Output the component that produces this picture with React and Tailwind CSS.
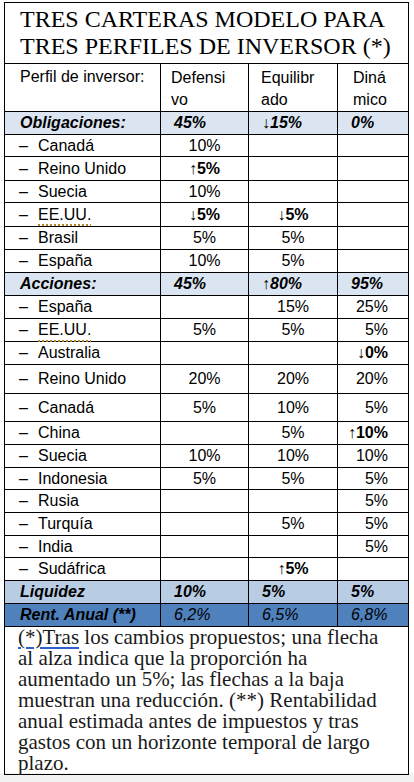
import React from 'react';

const obligaciones = [
  { name: 'Canadá', v: ['10%', '', ''], h: 'h-[22px]' },
  { name: 'Reino Unido', v: ['↑5%', '', ''], b: [0], h: 'h-[24px]' },
  { name: 'Suecia', v: ['10%', '', ''], h: 'h-[22px]' },
  { name: 'EE.UU.', v: ['↓5%', '↓5%', ''], b: [0, 1], h: 'h-[24px]', spell: true },
  { name: 'Brasil', v: ['5%', '5%', ''], h: 'h-[23px]' },
  { name: 'España', v: ['10%', '5%', ''], h: 'h-[23px]' },
];

const acciones = [
  { name: 'España', v: ['', '15%', '25%'], h: 'h-[23px]' },
  { name: 'EE.UU.', v: ['5%', '5%', '5%'], h: 'h-[23px]', spell: true },
  { name: 'Australia', v: ['', '', '↓0%'], b: [2], h: 'h-[23px]' },
  { name: 'Reino Unido', v: ['20%', '20%', '20%'], h: 'h-[29px]' },
  { name: 'Canadá', v: ['5%', '10%', '5%'], h: 'h-[28px]' },
  { name: 'China', v: ['', '5%', '↑10%'], b: [2], h: 'h-[23px]' },
  { name: 'Suecia', v: ['10%', '10%', '10%'], h: 'h-[23px]' },
  { name: 'Indonesia', v: ['5%', '5%', '5%'], h: 'h-[22px]' },
  { name: 'Rusia', v: ['', '', '5%'], h: 'h-[23px]' },
  { name: 'Turquía', v: ['', '5%', '5%'], h: 'h-[23px]' },
  { name: 'India', v: ['', '', '5%'], h: 'h-[22px]' },
  { name: 'Sudáfrica', v: ['', '↑5%', ''], b: [1], h: 'h-[23px]' },
];

const cell = 'border border-black p-0 align-middle';

function GroupRow({ label, values, bg, italicOnly }) {
  return (
    <tr className={`h-[23px] ${bg}`}>
      <td className={`${cell} pl-[15px] font-bold italic`}>{label}</td>
      {values.map((v, i) => (
        <td key={i} className={`${cell} pl-[13px] italic ${italicOnly ? 'font-normal' : 'font-bold'}`}>{v}</td>
      ))}
    </tr>
  );
}

function ItemRow({ row }) {
  const bold = row.b || [];
  return (
    <tr className={row.h}>
      <td className={`${cell} pl-[14px]`}>
        <span className="inline-block w-[19px]">–</span>
        {row.spell ? (
          <span className="underline decoration-dotted decoration-[#b8862a] decoration-2 underline-offset-[5px]">{row.name}</span>
        ) : row.name}
      </td>
      <td className={`${cell} text-center ${bold.includes(0) ? 'font-bold' : ''}`}>{row.v[0]}</td>
      <td className={`${cell} text-center ${bold.includes(1) ? 'font-bold' : ''}`}>{row.v[1]}</td>
      <td className={`${cell} text-right pr-[20px] ${bold.includes(2) ? 'font-bold' : ''}`}>{row.v[2]}</td>
    </tr>
  );
}

export default function App() {
  return (
    <div className="min-h-screen bg-[#f2f2f2]">
      <div className="bg-white h-[773px] pt-[2px] pl-[4px]">
        <table className="table-fixed border-collapse w-[404px] text-[16px] leading-[20px] text-black" style={{ fontFamily: '"Liberation Sans", Arial, sans-serif' }}>
          <colgroup>
            <col className="w-[156px]" />
            <col className="w-[88px]" />
            <col className="w-[89px]" />
            <col className="w-[71px]" />
          </colgroup>
          <tbody>
            <tr className="h-[61px]">
              <td colSpan={4} className={`${cell} pl-[15px] pt-[3px] align-top text-[24px] leading-[27px] whitespace-nowrap`} style={{ fontFamily: '"Liberation Serif", serif' }}>
                TRES CARTERAS MODELO PARA<br />TRES PERFILES DE INVERSOR (*)
              </td>
            </tr>
            <tr className="h-[45px]">
              <td className={`${cell} pl-[15px] align-top pt-[3px]`}>Perfil de inversor:</td>
              <td className={`${cell} pl-[10px] align-top pt-[3px] leading-[22px]`}>Defensi<br />vo</td>
              <td className={`${cell} pl-[12px] align-top pt-[3px] leading-[22px]`}>Equilibr<br />ado</td>
              <td className={`${cell} pl-[15px] align-top pt-[3px] leading-[22px]`}>Diná<br />mico</td>
            </tr>
            <GroupRow label="Obligaciones:" values={['45%', '↓15%', '0%']} bg="bg-[#dbe5f1]" />
            {obligaciones.map((r, i) => <ItemRow key={'o' + i} row={r} />)}
            <GroupRow label="Acciones:" values={['45%', '↑80%', '95%']} bg="bg-[#dbe5f1]" />
            {acciones.map((r, i) => <ItemRow key={'a' + i} row={r} />)}
            <GroupRow label="Liquidez" values={['10%', '5%', '5%']} bg="bg-[#b8cce4]" />
            <GroupRow label="Rent. Anual (**)" values={['6,2%', '6,5%', '6,8%']} bg="bg-[#4f81bd]" italicOnly />
            <tr className="h-[147px]">
              <td colSpan={4} className={`${cell} align-top pl-[13px] text-[21px] leading-[21px] whitespace-nowrap text-[#1a1a1a]`} style={{ fontFamily: '"Liberation Serif", serif' }}>
                <span className="underline decoration-[#2f5fd0] underline-offset-[3px]">(*)Tras</span> los cambios propuestos; una flecha<br />
                al alza indica que la proporción ha<br />
                aumentado un 5%; las flechas a la baja<br />
                muestran una reducción. (**) Rentabilidad<br />
                anual estimada antes de impuestos y tras<br />
                gastos con un horizonte temporal de largo<br />
                plazo.
              </td>
            </tr>
          </tbody>
        </table>
      </div>
    </div>
  );
}
